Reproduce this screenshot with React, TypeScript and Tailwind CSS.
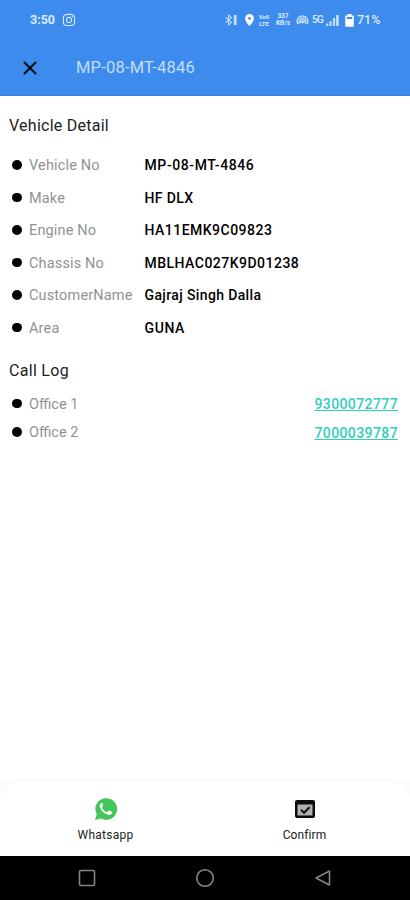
import { X } from "lucide-react";
import { FaInstagram } from "react-icons/fa";

const details = [
  { label: "Vehicle No", value: "MP-08-MT-4846", track: "tracking-[0.6px]" },
  { label: "Make", value: "HF DLX", track: "tracking-[0.4px]" },
  { label: "Engine No", value: "HA11EMK9C09823", track: "tracking-[0.48px]" },
  { label: "Chassis No", value: "MBLHAC027K9D01238", track: "tracking-[0.48px]" },
  { label: "CustomerName", value: "Gajraj Singh Dalla", track: "tracking-[0.37px]" },
  { label: "Area", value: "GUNA", track: "tracking-[0.6px]" },
];

const calls = [
  { label: "Office 1", phone: "9300072777" },
  { label: "Office 2", phone: "7000039787" },
];

function Bullet() {
  return <span className="mb-px ml-3 mr-[7.5px] size-[9.5px] shrink-0 rounded-full bg-black" />;
}

function StatusBar() {
  return (
    <div className="flex h-10 items-center pl-[30px] text-[#dcecff]">
      <span className="w-[32px] text-[12.5px] font-bold leading-none">3:50</span>
      <FaInstagram size={14} />
      <div className="ml-[148px] flex items-center">
        {/* bluetooth with battery level */}
        <svg width="15" height="12" viewBox="0 0 15 12" fill="none" stroke="currentColor" strokeWidth="1.1" opacity="0.85">
          <path d="M1.5 3.2l6 5.4L4.6 11V1l2.9 2.4-6 5.4" />
          <path d="M11.2 1v10" strokeWidth="2.8" />
        </svg>
        <svg className="ml-[6px]" width="9" height="12" viewBox="0 0 9 12" fill="#fff">
          <path fillRule="evenodd" d="M4.5 0A4.4 4.4 0 0 0 .1 4.4C.1 7.5 4.5 12 4.5 12s4.4-4.5 4.4-7.6A4.4 4.4 0 0 0 4.5 0zm0 3a1.4 1.4 0 1 1 0 2.8 1.4 1.4 0 0 1 0-2.8z" />
        </svg>
        <div className="ml-1 w-[12px] text-center text-[6px] font-bold leading-[7px]">
          <p className="-mx-1">Vo9</p>
          <p className="-mx-1">LTE</p>
        </div>
        <div className="ml-[5px] w-4 text-center text-[6.5px] font-bold leading-[7px]">
          <p>337</p>
          <p className="-mx-1">KB/s</p>
        </div>
        {/* hotspot */}
        <svg className="ml-[5px]" width="13" height="10" viewBox="0 0 13 10" fill="none" stroke="currentColor" strokeWidth="1.7" opacity="0.85">
          <path d="M2.3 9.3A5.2 5.2 0 1 1 10.7 9.3M4.3 8.3A2.9 2.9 0 1 1 8.7 8.3" />
          <circle cx="6.5" cy="6.8" r="0.9" fill="currentColor" />
        </svg>
        <span className="ml-[3px] w-[13px] text-[10px] font-medium leading-none tracking-[-0.8px]">5G</span>
        <svg className="ml-[1px]" width="13" height="12" viewBox="0 0 13 12" fill="currentColor">
          <path d="M0 9.5h2.3V12H0zM3.4 7h2.3v5H3.4zM6.9 4h2.3v8H6.9z" opacity="0.8" />
          <path d="M10.3 1h2.3v11h-2.3z" />
        </svg>
        <svg className="ml-[6px]" width="9" height="13" viewBox="0 0 9 13" fill="#fff">
          <path fillRule="evenodd" d="M2.5 0h4v1.4h1.2q1.1 0 1.1 1.1v9.2q0 1.1-1.1 1.1H1.3q-1.1 0-1.1-1.1V2.5q0-1.1 1.1-1.1h1.2zM1.7 3v2h5.6V3z" />
        </svg>
        <span className="ml-[3px] text-[12.5px] font-medium leading-none">71%</span>
      </div>
    </div>
  );
}

export default function App() {
  return (
    <div className="flex h-[900px] w-[410px] flex-col overflow-hidden bg-white font-[Roboto,sans-serif]">
      <header className="h-24 border-b border-[#3484e8] bg-[#3c8bed]">
        <StatusBar />
        <div className="flex h-14 items-center pl-[19px]">
          <X size={22} strokeWidth={2.3} color="#0b0f16" />
          <h1 className="ml-[35px] pt-px text-[16.5px] leading-none tracking-[0.2px] text-[#c3dffc]">MP-08-MT-4846</h1>
        </div>
      </header>

      <main className="flex-1">
        <h2 className="mt-5 ml-[9px] text-[16px] leading-5 tracking-[0.25px] text-[#222]">Vehicle Detail</h2>
        <div className="mt-[13px]">
          {details.map((d) => (
            <div key={d.label} className="flex h-[32.5px] items-center">
              <Bullet />
              <span className="w-[115.5px] pt-[2px] text-[14.5px] tracking-[0.15px] text-[#929292]">{d.label}</span>
              <span className={`pt-px text-[14px] font-medium text-black ${d.track}`}>{d.value}</span>
            </div>
          ))}
        </div>

        <h2 className="mt-4 ml-[9px] pt-px text-[16px] leading-5 tracking-[0.3px] text-[#222]">Call Log</h2>
        <div className="mt-[8.5px]">
          {calls.map((c) => (
            <div key={c.label} className="flex h-[28.5px] items-center pr-3">
              <Bullet />
              <span className="pt-[2px] text-[14.5px] text-[#929292]">{c.label}</span>
              <a className="ml-auto pt-[2px] text-[14px] font-medium tracking-[0.4px] text-[#2fd0b8] underline">{c.phone}</a>
            </div>
          ))}
        </div>
      </main>

      <div className="bg-[#fcfcfc]">
        <footer className="grid h-[75px] grid-cols-2 rounded-t-[20px] bg-white shadow-[0_-1px_3px_rgba(0,0,0,0.03)]">
          <div className="flex flex-col items-center pt-4 pl-[6px]">
            <svg width="24" height="24" viewBox="0 0 24 24">
              <path d="M1 23l1.7-5.7A10.9 10.9 0 1 1 7 21.6z" fill="#45c65a" />
              <path d="M8.5 6.3c-.3-.6-.8-.6-1.2-.4C5.8 6.7 5.4 8.5 6 10.2c1.3 3.7 4.4 6.6 8 7.6 1.8.5 3.7-.4 4.1-2 .1-.5.1-.8-.3-1l-2.5-1.2c-.4-.2-.7-.1-1 .2l-1 1.2c-.3.3-.6.3-1 .1-2-.9-3.3-2.2-4.3-4-.2-.4-.1-.6.2-.9l.8-1c.2-.3.2-.5.1-.8z" fill="#fff" />
            </svg>
            <span className="mt-[6px] text-[12px] leading-4 tracking-[0.25px] text-[#222]">Whatsapp</span>
          </div>
          <div className="flex flex-col items-center pt-4 pr-[6px]">
            <svg width="24" height="24" viewBox="0 0 24 24">
              <rect x="2" y="3" width="20" height="18" rx="2" fill="#0c0c0c" />
              <path d="M4.5 7.5h15v11h-15z" fill="#b0b0b0" />
              <path d="M8 12.8l3 3 5.5-5.5" fill="none" stroke="#111" strokeWidth="2" />
            </svg>
            <span className="mt-[6px] text-[12px] leading-4 tracking-[0.1px] text-[#222]">Confirm</span>
          </div>
        </footer>
      </div>

      <nav className="flex h-11 items-center justify-between bg-black px-[78px]">
        <svg width="18" height="18" viewBox="0 0 18 18" fill="none" stroke="#858585" strokeWidth="1.6">
          <rect x="1.5" y="1.5" width="15" height="15" rx="1.5" />
        </svg>
        <svg width="20" height="20" viewBox="0 0 20 20" fill="none" stroke="#858585" strokeWidth="1.6">
          <circle cx="10" cy="10" r="8.3" />
        </svg>
        <svg width="18" height="18" viewBox="0 0 18 18" fill="none" stroke="#858585" strokeWidth="1.6" strokeLinejoin="round">
          <path d="M15.5 2v14L2 9z" />
        </svg>
      </nav>
    </div>
  );
}
